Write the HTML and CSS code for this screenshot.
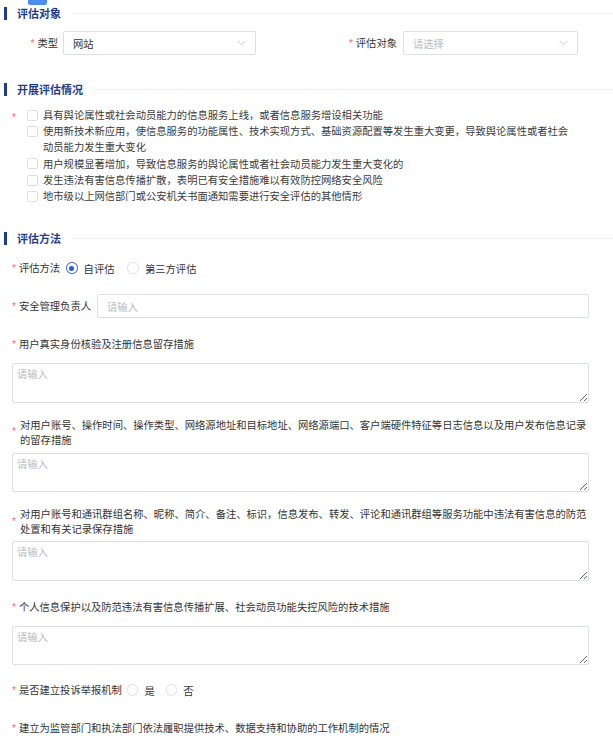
FILE: index.html
```html
<!DOCTYPE html>
<html lang="zh-CN">
<head>
<meta charset="utf-8">
<title>评估</title>
<link rel="stylesheet" href="styles.css">
</head>
<body>
<div class="page">
  <div class="topbar"><span class="topbtn"></span></div>

  <div class="section-title"><span class="bar"></span><span class="title-text">评估对象</span><span class="title-line"></span></div>
  <div class="row-two">
    <div class="col col-left">
      <span class="inline-label lbl-left"><span class="req">*</span>类型</span>
      <div class="select sel-left"><span class="sel-value">网站</span><svg class="chev" width="9" height="6" viewBox="0 0 9 6"><polyline points="0.5,0.8 4.5,4.8 8.5,0.8" fill="none" stroke="#c0c4cc" stroke-width="0.9"/></svg></div>
    </div>
    <div class="col col-right">
      <span class="inline-label lbl-right"><span class="req">*</span>评估对象</span>
      <div class="select sel-right"><span class="sel-placeholder">请选择</span><svg class="chev" width="9" height="6" viewBox="0 0 9 6"><polyline points="0.5,0.8 4.5,4.8 8.5,0.8" fill="none" stroke="#c0c4cc" stroke-width="0.9"/></svg></div>
    </div>
  </div>

  <div class="section-title sec2"><span class="bar"></span><span class="title-text">开展评估情况</span><span class="title-line"></span></div>
  <div class="check-group">
    <span class="req req-group">*</span>
    <div class="check-list">
      <div class="check-item"><span class="checkbox"></span><span class="check-text">具有舆论属性或社会动员能力的信息服务上线，或者信息服务增设相关功能</span></div>
      <div class="check-item"><span class="checkbox"></span><span class="check-text">使用新技术新应用，使信息服务的功能属性、技术实现方式、基础资源配置等发生重大变更，导致舆论属性或者社会动员能力发生重大变化</span></div>
      <div class="check-item"><span class="checkbox"></span><span class="check-text">用户规模显著增加，导致信息服务的舆论属性或者社会动员能力发生重大变化的</span></div>
      <div class="check-item"><span class="checkbox"></span><span class="check-text">发生违法有害信息传播扩散，表明已有安全措施难以有效防控网络安全风险</span></div>
      <div class="check-item"><span class="checkbox"></span><span class="check-text">地市级以上网信部门或公安机关书面通知需要进行安全评估的其他情形</span></div>
    </div>
  </div>

  <div class="section-title sec3"><span class="bar"></span><span class="title-text">评估方法</span><span class="title-line"></span></div>
  <div class="form">
    <div class="item radio-row">
      <span class="inline-label"><span class="req">*</span>评估方法</span>
      <span class="radio checked first"></span><span class="radio-text">自评估</span>
      <span class="radio"></span><span class="radio-text">第三方评估</span>
    </div>
    <div class="item input-row">
      <span class="inline-label"><span class="req">*</span>安全管理负责人</span>
      <input class="text-input" type="text" placeholder="请输入">
    </div>
    <div class="item">
      <div class="top-label"><span class="req">*</span>用户真实身份核验及注册信息留存措施</div>
      <textarea class="area" placeholder="请输入"></textarea>
    </div>
    <div class="item">
      <div class="top-label multi"><span class="req req-mid">*</span><span class="label-body">对用户账号、操作时间、操作类型、网络源地址和目标地址、网络源端口、客户端硬件特征等日志信息以及用户发布信息记录的留存措施</span></div>
      <textarea class="area" placeholder="请输入"></textarea>
    </div>
    <div class="item">
      <div class="top-label multi short"><span class="req req-mid">*</span><span class="label-body">对用户账号和通讯群组名称、昵称、简介、备注、标识，信息发布、转发、评论和通讯群组等服务功能中违法有害信息的防范处置和有关记录保存措施</span></div>
      <textarea class="area" placeholder="请输入"></textarea>
    </div>
    <div class="item item-tight">
      <div class="top-label"><span class="req">*</span>个人信息保护以及防范违法有害信息传播扩展、社会动员功能失控风险的技术措施</div>
      <textarea class="area" placeholder="请输入"></textarea>
    </div>
    <div class="item radio-row">
      <span class="inline-label"><span class="req">*</span>是否建立投诉举报机制</span>
      <span class="radio second"></span><span class="radio-text">是</span>
      <span class="radio third"></span><span class="radio-text">否</span>
    </div>
    <div class="item">
      <div class="top-label"><span class="req">*</span>建立为监管部门和执法部门依法履职提供技术、数据支持和协助的工作机制的情况</div>
    </div>
  </div>
</div>
</body>
</html>
```

FILE: styles.css
```css
* { box-sizing: border-box; }
html, body { margin: 0; padding: 0; background: #fff; }
body {
  font-family: "Noto Sans CJK SC", "Noto Sans", sans-serif;
  font-size: 10.3px;
  color: #333;
  overflow: hidden;
}
.page { width: 613px; }

.topbar { height: 5px; padding-left: 28px; }
.topbtn { display: block; width: 19px; height: 5px; background: #4b8ef0; border-radius: 0 0 2px 2px; }

.section-title { display: flex; align-items: center; height: 16px; padding-left: 4px; }
.bar { width: 2.5px; height: 13px; background: #1f3c8c; }
.title-text { margin-left: 10.5px; font-size: 11px; font-weight: 700; color: #1f3c8c; line-height: 16px; }
.title-line { flex: 1; height: 1px; background: #efefef; margin-left: 11px; }
.sec2 { margin-top: 26px; }
.sec3 { margin-top: 26px; }

.row-two { display: flex; margin-top: 10px; height: 24px; }
.col { display: flex; align-items: center; }
.col-left { width: 300px; }
.inline-label { white-space: nowrap; line-height: 24px; }
.lbl-left { width: 58px; text-align: right; margin-right: 5px; }
.lbl-right { width: 97px; text-align: right; margin-right: 6px; }
.req { color: #f56c6c; font-family: "Liberation Sans", sans-serif; font-size: 10px; margin-right: 3px; }

.select { height: 23.5px; border: 1px solid #dcdfe6; border-radius: 2px; display: flex; align-items: center; justify-content: space-between; padding: 0 9px 0 9px; background: #fff; }
.sel-left { width: 193px; }
.sel-right { width: 174.5px; }
.sel-value { color: #333; }
.sel-placeholder { color: #bbb; }
.chev { display: block; }

.check-group { display: flex; margin-top: 10px; padding-left: 12px; }
.req-group { width: 15px; margin: 0; padding-top: 3px; line-height: 16.2px; }
.check-list { display: flex; flex-direction: column; }
.check-item { display: flex; align-items: flex-start; line-height: 16.2px; color: #3a3a3a; }
.checkbox { width: 11px; height: 11px; border: 1px solid #dcdfe6; border-radius: 2px; background: #fff; margin-top: 2.7px; margin-right: 5px; flex: none; }
.check-text { width: 532px; }

.form { padding: 10px 24px 0 12px; }
.item { margin-bottom: 14px; }
.item-tight { margin-bottom: 13px; }
.radio-row, .input-row { display: flex; align-items: center; height: 24px; }
.radio { width: 11.5px; height: 11.5px; border: 1px solid #dcdfe6; border-radius: 50%; margin-left: 13px; margin-right: 6px; flex: none; background: #fff; }
.radio.first { margin-left: 6px; }
.radio.second { margin-left: 5px; }
.radio.third { margin-left: 11px; }
.radio.checked { border-color: #2a5bd7; display: flex; align-items: center; justify-content: center; }
.radio.checked::after { content: ""; width: 5px; height: 5px; border-radius: 50%; background: #2a5bd7; }
.radio-text { color: #333; white-space: nowrap; }

.text-input { margin-left: 6px; flex: 1; height: 23.5px; border: 1px solid #dcdfe6; border-radius: 2px; padding: 0 9px; font: inherit; color: #333; outline: none; }
.text-input::placeholder { color: #bbb; }

.top-label { line-height: 24px; margin-bottom: 6px; white-space: nowrap; }
.top-label.multi { display: flex; align-items: center; line-height: 15px; white-space: normal; margin-bottom: 6px; }
.top-label.multi.short { margin-bottom: 5px; }
.req-mid { flex: none; width: 8px; margin-right: 0; }
.label-body { flex: 1; }

.area { display: block; width: 577px; height: 39.5px; border: 1px solid #dcdfe6; border-radius: 2px; padding: 2px 4px; font: inherit; line-height: 15px; color: #333; resize: vertical; outline: none; }
.area::placeholder { color: #bbb; }
```
